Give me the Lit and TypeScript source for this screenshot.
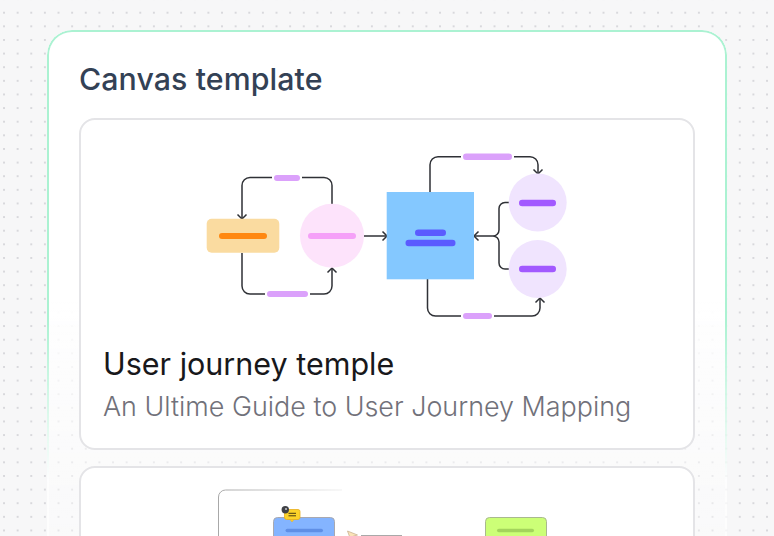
import { LitElement, html, css, svg } from "lit";
import { customElement } from "lit/decorators.js";

const LINE = "#2f3136";

@customElement("app-root")
export class AppRoot extends LitElement {
  static styles = css`
    :host {
      display: block;
      width: 774px;
      height: 536px;
      overflow: hidden;
      font-family: "Inter", "Noto Sans", sans-serif;
      background-color: #f7f7f8;
      background-image: radial-gradient(circle, #d8d8dc 0.7px, transparent 1.2px);
      background-size: 13.64px 13.64px;
      background-position: -2.8px 5.9px;
    }
    .panel {
      position: relative;
      box-sizing: border-box;
      width: 680px;
      height: 800px;
      margin: 30px 0 0 47px;
      padding: 28px 30px;
      border: 2px solid rgba(255, 255, 255, 0.55);
      border-radius: 25px;
      background: linear-gradient(#fff 0, #fff 265px, rgba(255, 255, 255, 0.8) 310px, rgba(255, 255, 255, 0.5) 420px, rgba(255, 255, 255, 0.35) 510px);
      background-clip: border-box;
      display: flex;
      flex-direction: column;
    }
    .panel::before {
      content: "";
      position: absolute;
      inset: -2px -2px auto;
      height: 470px;
      box-sizing: border-box;
      border: 2px solid #abf2d2;
      border-bottom: 0;
      border-radius: 25px 25px 0 0;
      -webkit-mask-image: linear-gradient(#000 0, #000 290px, transparent 450px);
      mask-image: linear-gradient(#000 0, #000 290px, transparent 450px);
      pointer-events: none;
    }
    h1 {
      margin: 0 0 20px;
      font-size: 30.3px;
      line-height: 38px;
      font-weight: 500;
      letter-spacing: 0.1px;
      color: #334155;
    }
    .card {
      box-sizing: border-box;
      width: 616px;
      flex: none;
      background: #fff;
      border: 2px solid #e4e4e7;
      border-radius: 16px;
    }
    .first {
      height: 332px;
      padding: 20px 22px 0;
      margin-bottom: 16px;
    }
    .second {
      height: 300px;
      padding: 20px 22px 0;
    }
    .art {
      display: block;
      width: 380px;
      height: 190px;
      margin: 0 auto;
    }
    .art2 {
      display: block;
      width: 380px;
      height: 60px;
      margin: 0 auto;
    }
    h2 {
      margin: 14px 0 0;
      font-size: 30.5px;
      line-height: 40px;
      font-weight: 400;
      color: #18181b;
    }
    p {
      margin: 4px 0 0;
      font-size: 26.9px;
      line-height: 36px;
      font-weight: 300;
      color: #71717a;
    }
  `;

  private arrow(x: number, y: number, dir: "u" | "d" | "l" | "r") {
    const s = 4.5;
    const pts = {
      d: `M${x - s} ${y - s}L${x} ${y}L${x + s} ${y - s}`,
      u: `M${x - s} ${y + s}L${x} ${y}L${x + s} ${y + s}`,
      l: `M${x + s} ${y - s}L${x} ${y}L${x + s} ${y + s}`,
      r: `M${x - s} ${y - s}L${x} ${y}L${x - s} ${y + s}`,
    }[dir];
    return svg`<path d=${pts} fill="none" stroke=${LINE} stroke-width="1.5"/>`;
  }

  private bar(x1: number, x2: number, y: number, h: number, fill: string) {
    return svg`<rect x=${x1} y=${y - h / 2} width=${x2 - x1} height=${h} rx=${h / 2} fill=${fill}/>`;
  }

  private diagram() {
    const pill = "#dba1fb";
    return html`<svg class="art" viewBox="197 140 380 190">
      <g fill="none" stroke=${LINE} stroke-width="1.5">
        <path d="M332 204V185.500a8 8 0 0 0-8-8H302M272 177.500H250a8 8 0 0 0-8 8V219"/>
        <path d="M242 253V286a8 8 0 0 0 8 8H265M310 294H324a8 8 0 0 0 8-8V268"/>
        <path d="M364 236H387"/>
        <path d="M430 192V164.700a8 8 0 0 1 8-8H461M514 156.700H530a8 8 0 0 1 8 8V174"/>
        <path d="M427.500 279V308a8 8 0 0 0 8 8H461M494 316H532a8 8 0 0 0 8-8V298"/>
        <path d="M509 202.500H505a6 6 0 0 0-6 6V230a6 6 0 0 1-6 6H474M509 269H505a6 6 0 0 1-6-6V242a6 6 0 0 0-6-6"/>
      </g>
      ${this.arrow(242, 219, "d")}${this.arrow(332, 268, "u")}${this.arrow(387, 236, "r")}
      ${this.arrow(538, 174, "d")}${this.arrow(540, 298, "u")}${this.arrow(474, 236, "l")}
      <rect x="206.700" y="218.700" width="72.600" height="34" rx="5" fill="#fadba0"/>
      ${this.bar(219, 267, 236, 6, "#ff8811")}
      <circle cx="332" cy="235.700" r="32" fill="#fde3fb"/>
      ${this.bar(308, 356, 236, 6, "#f5a0f8")}
      <rect x="386.700" y="192" width="87.300" height="87.300" fill="#84c8ff"/>
      ${this.bar(415, 446, 232.700, 6.500, "#5b5bff")}
      ${this.bar(405.500, 455.500, 243, 6.500, "#5b5bff")}
      <circle cx="537.700" cy="202.500" r="29" fill="#f0e4fe"/>
      <circle cx="537.700" cy="269" r="29" fill="#f0e4fe"/>
      ${this.bar(519, 556, 203, 6.500, "#a259ff")}
      ${this.bar(519, 556, 269, 6.500, "#a259ff")}
      ${this.bar(274, 300, 178, 6, pill)}
      ${this.bar(267, 308, 294, 6, pill)}
      ${this.bar(463, 512, 156.700, 6.500, pill)}
      ${this.bar(463, 492, 316, 6, pill)}
    </svg>`;
  }

  private diagram2() {
    return html`<svg class="art2" viewBox="197 488 380 60">
      <defs>
        <linearGradient id="edge" x1="218" x2="342" y1="0" y2="0" gradientUnits="userSpaceOnUse">
          <stop offset="0" stop-color="#a8a8a8"/>
          <stop offset="0.6" stop-color="#d4d4d4"/>
          <stop offset="1" stop-color="#f0f0f0"/>
        </linearGradient>
      </defs>
      <path d="M218.500 548V497a7 7 0 0 1 7-7H342" fill="none" stroke="url(#edge)" stroke-width="1"/>
      <rect x="273.500" y="517.500" width="61" height="40" rx="4" fill="#84b4ff" stroke="#a9a9b0" stroke-width="1"/>
      ${this.bar(285.500, 323, 530.500, 3.500, "#5f8fe6")}
      <rect x="284.500" y="509.500" width="15.500" height="10" rx="2" fill="#fcd32a" stroke="#e8ad1c" stroke-width="0.800"/>
      <path d="M290 519.500h4l-2 2.500z" fill="#fcd32a" stroke="#e8ad1c" stroke-width="0.500"/>
      <path d="M288.500 513.300h7.500M288.500 515.800h7.500" stroke="#4a3d10" stroke-width="1"/>
      <circle cx="285.300" cy="509.700" r="3.700" fill="#3f4146"/>
      <circle cx="286" cy="509" r="1" fill="#c9c9cf"/>
      <path d="M347.500 531l10 4-5 1.500-1.500 4z" fill="#fbe3b8" stroke="#c9b392" stroke-width="0.800"/>
      <rect x="361.500" y="535.500" width="40" height="20" fill="#fff" stroke="#a9a9a9" stroke-width="1"/>
      <rect x="485.500" y="517.500" width="61" height="40" rx="4" fill="#ccff77" stroke="#a9b98f" stroke-width="1"/>
      ${this.bar(497, 534, 530.500, 3.500, "#a3d45c")}
    </svg>`;
  }

  render() {
    return html`
      <section class="panel">
        <h1>Canvas template</h1>
        <article class="card first">
          ${this.diagram()}
          <h2>User journey temple</h2>
          <p>An Ultime Guide to User Journey Mapping</p>
        </article>
        <article class="card second">${this.diagram2()}</article>
      </section>
    `;
  }
}
